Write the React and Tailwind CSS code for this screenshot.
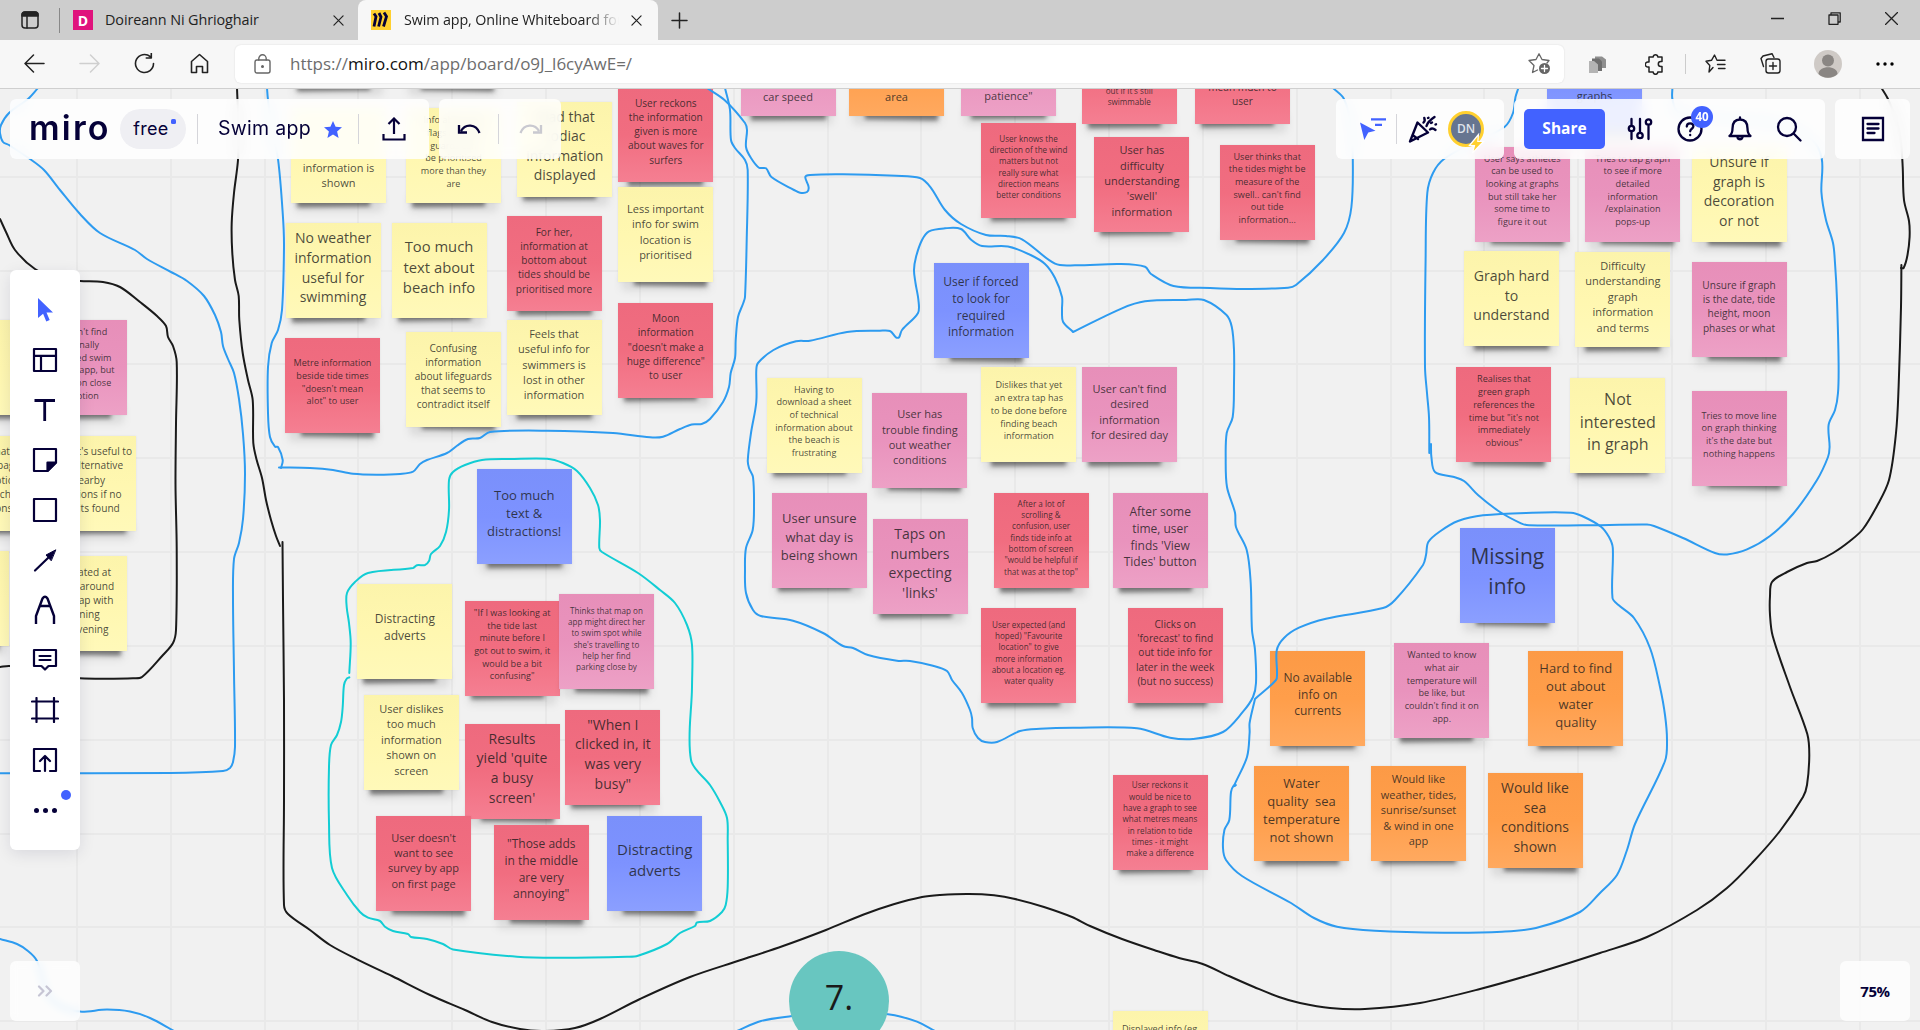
import React from "react";

/* ---------- board data ---------- */

const TONES = {
  Y: "bg-linear-to-b from-[#fcf4ab] via-[#fff7b0] to-[#fff9b9]",
  R: "bg-linear-to-b from-[#ee6a7e] via-[#f16d80] to-[#f57f92]",
  P: "bg-linear-to-b from-[#e78fb9] via-[#e993bd] to-[#eda1c6]",
  B: "bg-linear-to-b from-[#7a90fb] via-[#7d92ff] to-[#8b9fff]",
  O: "bg-linear-to-b from-[#fc9a46] via-[#ff9e4a] to-[#ffa95f]",
};

// [x, y, tone, shadow side, font size, lines]
const NOTES = [
  [291, -8, "Y", "l", 11, []],
  [405, -8, "Y", "r", 11, []],
  [291, 108, "Y", "l", 11, ["", "", "", "information is", "shown"]],
  [406, 108, "Y", "l", 9.1, ["Info about the", "flags and life", "guards can", "be prioritised", "more than they", "are"]],
  [517.3, 101.5, "Y", "l", 14, ["Glad that", "zodiac", "information", "displayed"]],
  [618.3, 87, "R", "c", 10.15, ["User reckons", "the information", "given is more", "about waves for", "surfers"]],
  [285.5, 223.3, "Y", "l", 14, ["No weather", "information", "useful for", "swimming"]],
  [391.5, 222.7, "Y", "l", 14.8, ["Too much", "text about", "beach info"]],
  [506.5, 216, "R", "c", 10.15, ["For her,", "information at", "bottom about", "tides should be", "prioritised more"]],
  [618, 187.3, "Y", "r", 11, ["Less important", "info for swim", "location is", "prioritised"]],
  [285, 338.3, "R", "r", 9.1, ["Metre information", "beside tide times", "\"doesn't mean", "alot\" to user"]],
  [405.7, 331.8, "Y", "r", 10.15, ["Confusing", "information", "about lifeguards", "that seems to", "contradict itself"]],
  [506.5, 320, "Y", "c", 11, ["Feels that", "useful info for", "swimmers is", "lost in other", "information"]],
  [618.2, 302.5, "R", "l", 10.15, ["Moon", "information", "\"doesn't make a", "huge difference\"", "to user"]],

  [740.5, 21.3, "P", "c", 11, ["", "", "", "", "car speed"]],
  [849, 21.3, "O", "r", 11, ["", "", "", "", "area"]],
  [961, 20.7, "P", "c", 11, ["", "", "", "", "patience\""]],
  [1081.8, 29, "R", "l", 8.1, ["", "", "", "", "out if it's still", "swimmable"]],
  [1195, 28.7, "R", "l", 10.15, ["", "", "", "mean much to", "user"]],
  [981, 122.5, "R", "c", 8.1, ["User knows the", "direction of the wind", "matters but not", "really sure what", "direction means", "better conditions"]],
  [1094.4, 136.5, "R", "l", 11, ["User has", "difficulty", "understanding", "'swell'", "information"]],
  [1219.7, 144.5, "R", "r", 9.1, ["User thinks that", "the tides might be", "measure of the", "swell.. can't find", "out tide", "information..."]],
  [933.5, 263.3, "B", "r", 12, ["User if forced", "to look for", "required", "information"]],
  [766.5, 377.5, "Y", "l", 9.1, ["Having to", "download a sheet", "of technical", "information about", "the beach is", "frustrating"]],
  [872.3, 392.7, "P", "r", 11, ["User has", "trouble finding", "out weather", "conditions"]],
  [981.3, 367, "Y", "c", 9.1, ["Dislikes that yet", "an extra tap has", "to be done before", "finding beach", "information"]],
  [1082, 367.3, "P", "l", 11, ["User can't find", "desired", "information", "for desired day"]],
  [771.8, 492.5, "P", "l", 13, ["User unsure", "what day is", "being shown"]],
  [872.5, 519, "P", "l", 14, ["Taps on", "numbers", "expecting", "'links'"]],
  [993.5, 493, "R", "l", 8.1, ["After a lot of", "scrolling &", "confusion, user", "finds tide info at", "bottom of screen", "\"would be helpful if", "that was at the top\""]],
  [1112.7, 493.3, "P", "l", 12, ["After some", "time, user", "finds 'View", "Tides' button"]],
  [981.2, 608.3, "R", "l", 8.1, ["User expected (and", "hoped) \"Favourite", "location\" to give", "more information", "about a location eg.", "water quality"]],
  [1127.7, 608.3, "R", "l", 10.15, ["Clicks on", "'forecast' to find", "out tide info for", "later in the week", "(but no success)"]],

  [476.7, 469, "B", "c", 13, ["Too much", "text &", "distractions!"]],
  [357.3, 584, "Y", "l", 12, ["Distracting", "adverts"]],
  [464.7, 600.7, "R", "l", 9.1, ["\"If I was looking at", "the tide last", "minute before I", "got out to swim, it", "would be a bit", "confusing\""]],
  [559, 594.3, "P", "r", 8.1, ["Thinks that map on", "app might direct her", "to swim spot while", "she's travelling to", "help her find", "parking close by"]],
  [363.8, 695.3, "Y", "l", 11, ["User dislikes", "too much", "information", "shown on", "screen"]],
  [464.5, 723.7, "R", "r", 14, ["Results", "yield 'quite", "a busy", "screen'"]],
  [565.3, 709.7, "R", "l", 14, ["\"When I", "clicked in, it", "was very", "busy\""]],
  [376, 816.2, "R", "r", 11, ["User doesn't", "want to see", "survey by app", "on first page"]],
  [493.7, 825.3, "R", "r", 12, ["\"Those adds", "in the middle", "are very", "annoying\""]],
  [607.2, 816.2, "B", "r", 15, ["Distracting", "adverts"]],

  [1459.8, 527.5, "B", "r", 21, ["Missing", "info"]],
  [1270.2, 650.7, "O", "c", 12, ["No available", "info on", "currents"]],
  [1394.3, 643, "P", "l", 9.1, ["Wanted to know", "what air", "temperature will", "be like, but", "couldn't find it on", "app."]],
  [1528.3, 650.7, "O", "c", 13, ["Hard to find", "out about", "water", "quality"]],
  [1254, 766, "O", "c", 13, ["Water", "quality  sea", "temperature", "not shown"]],
  [1371, 765.7, "O", "c", 11, ["Would like", "weather, tides,", "sunrise/sunset", "& wind in one", "app"]],
  [1487.5, 773, "O", "r", 14, ["Would like", "sea", "conditions", "shown"]],
  [1112.5, 774.8, "R", "l", 8.1, ["User reckons it", "would be nice to", "have a graph to see", "what metres means", "in relation to tide", "times - it might", "make a difference"]],

  [1547, 36, "B", "r", 11, ["", "", "graphs"]],
  [1474.7, 146.5, "P", "r", 9.1, ["User says athletes", "can be used to", "looking at graphs", "but still take her", "some time to", "figure it out"]],
  [1585.2, 146.5, "P", "r", 9.1, ["Tries to tap graph", "to see if more", "detailed", "information", "/explaination", "pops-up"]],
  [1691.5, 147, "Y", "r", 14, ["Unsure if", "graph is", "decoration", "or not"]],
  [1464, 251.3, "Y", "c", 14.1, ["Graph hard", "to", "understand"]],
  [1575.3, 252.3, "Y", "c", 11, ["Difficulty", "understanding", "graph", "information", "and terms"]],
  [1691.5, 262.2, "P", "r", 10.15, ["Unsure if graph", "is the date, tide", "height, moon", "phases or what"]],
  [1456.4, 367.3, "R", "r", 9.1, ["Realises that", "green graph", "references the", "time but \"it's not", "immediately", "obvious\""]],
  [1570.3, 377.8, "Y", "l", 16, ["Not", "interested", "in graph"]],
  [1691.5, 390.7, "P", "r", 9.1, ["Tries to move line", "on graph thinking", "it's the date but", "nothing happens"]],

  [1113.2, 1010.5, "Y", "c", 9.1, ["Displayed info (eg.", "", "", "", ""]],

  [-70, 320, "Y", "c", 10.15, []],
  [32.3, 320, "P", "l", 9.1, ["We can't find", "originally", "searched swim", "spot on app, but", "based on close", "adoption"]],
  [-54, 435.5, "Y", "c", 10.15, ["Says that is", "home page", "description", "for beach is", "conditions in"]],
  [41, 435.5, "Y", "c", 10.15, ["When it's useful to", "see alternative", "nearby", "locations if no", "results found"]],
  [-86, 551, "Y", "c", 10.15, ["", "", "", "results like this"]],
  [32.3, 556, "Y", "r", 10.15, ["It's located at", "always around", "on a map with", "morning", "and evening"]],
];

const BLUE = "#2d9bf0";
const BLACK = "#1a1a1a";
const TEAL = "#12cdd4";

const STROKES = [
  [BLUE, [38,88,28,99,9,113,1,125,0,133,3,142,9,145,30,159,44,170,60,190,80,214,100,233,135,250,147,259,171,272,187,281,204,296,215,315,221,332,223,346,228,359,234,373,239,399,243,434,245,474,243,519,239,543,234,559,233,598,234,673,235,747,233,762,230,768,223,771,170,773,0,773.3]],
  [BLACK, [0,219,6,232,15,250,35,269,58,279,80,281,103,282,120,287,140,302,157,316,166,326,168,337,173,346,176.7,362,176,424,175.5,484,176.7,548,176,630,173,643,163,655,142,677,133,678.3,80,678.3,45,673,10,666,0,667]],
  [BLACK, [237,88,238.5,130,238,160,234,193,231.7,223,232.3,253,235,280,238.7,296,239.3,320,242.7,353,248,380,252.7,400,253.3,443,256.7,460,262,478,266,500,271,520,276,536,280,546]],
  [BLACK, [282.5,542,283,600,284,700,284,800,284,905,288,914,310,930,330,945,357,959.3,392,976,430,995,465,1010,492,1022,520,1029,545,1031,575,1028,600,1019,640,999,690,977,740,960.3,783,946,826,930,863,914.7,893.6,904.3,922,897,940,895,969,894,994,895.3,1015,899,1044,907,1072,917,1090,926,1122,939,1154,950,1179,958,1202,963.7,1229,976,1254,987,1279,997,1300,1003,1330,1008,1365,1009,1420,1003,1480,989,1540,972,1600,953,1647,937,1697,910,1727,888,1753,862,1780,831,1803,797,1807,785,1809.3,755,1807.3,734,1790,687,1772.7,636,1770,615,1770,596,1772,582,1787,572,1807,563,1817,561,1833,553,1850,541,1863,529,1877,506,1889,480,1896,433,1898.6,387,1901,307,1901.4,265]],
  [BLACK, [1881.5,88,1888,99,1897,122,1901,143,1902.7,167,1904,200,1909,221,1909.6,237,1907.5,255,1903.6,268,1901,268]],
  [BLUE, [1518.4,88,1515.5,97,1513,113,1504.5,127,1474,142,1444,159,1433,173,1427.3,193,1425.6,260,1425,367,1427,393,1429,417,1429.3,453]],
  [BLUE, [1431,444,1431.4,457,1435,472,1453,476.7,1464,481,1478,495,1500,512,1521,523.3,1529,525.3,1582,525.3,1647,524.5,1654,526,1683,538,1715,553,1727,554.4,1747,549.4,1770,536,1793,514,1817,480,1828,457,1829.6,447,1828.6,425,1835,410,1838,393,1838.6,363,1837,300,1835,263,1833,243,1826,220,1821.4,192,1821.8,159,1812,140,1780,124,1720,118,1678,112,1672.4,99,1672.4,88]],
  [BLUE, [1255,699,1276,680,1277,673,1276.8,650,1284,638,1299,627.7,1326,618.7,1383,608,1395,600,1423,565,1426,555,1428.3,542,1440.6,531,1458,521,1483,515.3,1532,512.7,1571,512.7,1582,516,1601,526.7,1609,537,1612.8,548,1612.5,598,1618.5,605,1634,618,1650,648,1660,687,1665,715,1667,740,1665,761,1635,824,1627,850,1617,875,1600,893,1580,912,1536,928,1502,931.7,1444,932.7,1375,930.7,1337,926.7,1314,918,1291,903,1242,876,1226,860,1223,848,1224.4,830,1229.3,820,1231,792,1234,785,1236,785,1234,786,1247,757,1249.6,733,1249.6,723,1255,699]],
  [BLUE, [1073,332,1063,321.7,1062,310,1062,297,1055,278,1045,264,1030.6,255,1008,246.5,982,246,971.4,240,961,229,945,228.3,929,231.3,922,240,916,257,914,270,915.5,283,918.4,300,918,313,902,330,899,337.3,896,337.3,890,331,880,330.7,847,332,810,340.7,796,341.3,773.5,350,758,363,756.3,370,756.3,402,751,433,747.8,460,749,468,753,477,754,507,752.7,530,746,548,745,570,746,593,753,610,760.7,616,793,620.7,823,633,843,646,853,648,868,655,897,660.7,910,661,933,665.7,947,671,952,680,962,693,970,710,972,718,972.7,728,978,738,985,742,997,742,1020,731,1040,728.7,1073,727.7,1137,728.3,1170,737.7,1193,739,1223,732,1243,711.7,1253,697,1256,683,1255,650,1252,630,1250.7,583,1246.7,550,1236,527,1235,512.7,1227,487,1225.7,460,1226.7,433,1232.7,417,1234,383,1234,350,1231.8,327,1226.5,315,1204,300,1186,300,1145,301.3,1122,308.3,1073,332]],
  [BLUE, [707,88,724.5,100,745,123,747,130,746,147,751,158,759,167.7,766,168.3,771.4,177,794,190,800,192.7,807,192,808.6,187,805.3,177,810,175,843,174.3,896,175.7,920,178,930.6,187.3,945,210,961,224,986,235,1006,236,1022,239.3,1055,263.7,1075,265.3,1120,264,1145,266.7,1151,274,1173.5,286,1210,288,1243,289,1288,287.7,1296,285,1323,260,1344,233,1351.4,207,1352.8,159,1351,125,1344,99,1333,88]],
  [BLUE, [725,88,730,110,731,140,735,148,745,160,747.7,170,746.7,240,745,297,743.3,303,738,317,735.7,340,735,358,730.7,373,729,387,723,402,710,419,701.7,424,691.7,424.5,680,429,663,436.7,650,437.3,613,433,547,430.7,490,432,480,438,468,439,457,445.7,447,453,427,460,420,464,413,471.7,400,474,377,474.7,353,473.7,333,470,310,468,279,467.5]],
  [BLUE, [267,88,268,100,272,130,278,159,282.7,213,284,247,282,310,278,330,271.7,343,268,367,268,413,270,437,275,446.7,278,447,282.7,460,281,468]],
  [TEAL, [349.3,673,350.7,643,349,623,346.7,607,347,593,355,582,368,573,413,568,417,565.2,425,565,429,561,431,554,440,546,446,532,449,510,449,480,453,472,465,465,482,460,510,459,547,458.7,563,463,577,471,590,488,598,505,600,520,599.3,548,602,552,638,573,660,590,675,603,687,625,692,645,692,687,691,760,710,785,720,802,727,818,727.7,840,727.7,887,725.7,905,722,912,710,921,697,922.5,695,926,680,933,667,944,638,955.7,627,956.7,560,957.7,517,956.7,453,949.5,443,944,427,939,411,937,408,934,393,931,385,926.7,380,921,368,917.7,360,912,347,895,332,868,329,823,329,767,331,745,337,735,341,722,342.7,707,344,685,346.5,679,349.3,677.3]],
  [BLUE, [0,939,17,944,28,951,37,961,48,995,62,1007,80,1011.6,107,1009.6,130,1011.6,150,1018,174,1031]],
  [BLUE, [737,1031,761,1021,792,1016,840,1010,888,1014.3,901,1016.7,917,1021.7,935,1031]],
];

// Smooths a flat list of coordinates into a cubic path.
function smoothPath(f) {
  const p = [];
  for (let i = 0; i < f.length; i += 2) p.push([f[i], f[i + 1]]);
  let d = `M${p[0][0]} ${p[0][1]}`;
  const len = (a, b) => Math.hypot(b[0] - a[0], b[1] - a[1]) || 1;
  for (let i = 0; i < p.length - 1; i++) {
    const a = p[i - 1] || p[i], b = p[i], c = p[i + 1], e = p[i + 2] || c;
    const l = len(b, c);
    const l0 = len(a, b), l2 = len(c, e);
    const k1 = (0.33 * l) / (l0 + l), k2 = (0.33 * l) / (l + l2);
    d += `C${(b[0] + (c[0] - a[0]) * k1).toFixed(1)} ${(b[1] + (c[1] - a[1]) * k1).toFixed(1)} ${(c[0] - (e[0] - b[0]) * k2).toFixed(1)} ${(c[1] - (e[1] - b[1]) * k2).toFixed(1)} ${c[0]} ${c[1]}`;
  }
  return d;
}

const SHADOWS = {
  l: "left-[6px] right-[16px] rotate-[-0.8deg]",
  c: "left-[10px] right-[10px] rotate-[-0.5deg]",
  r: "left-[16px] right-[6px] rotate-[1deg]",
};

function Note({ x, y, tone, side, size, lines }) {
  return (
    <div className="absolute size-[95px]" style={{ left: x, top: y }}>
      <div className={`absolute -bottom-[3.5px] h-[12px] bg-black/45 blur-[2px] ${SHADOWS[side]}`} />
      <div className="absolute inset-x-[4px] -bottom-[8px] h-[16px] bg-black/10 blur-[4px]" />
      <div
        className={`relative flex size-full flex-col items-center justify-center whitespace-pre pb-[6.500px] text-center leading-[1.4] text-[#1a1a1a]/80 shadow-[0_0_2px_rgba(0,0,0,0.08)] ${TONES[tone]}`}
        style={{ fontSize: size }}
      >
        {lines.map((line, i) => (
          <div key={i} className="shrink-0">{line || "\u00a0"}</div>
        ))}
      </div>
    </div>
  );
}

function Board() {
  const vs = Array.from({ length: 20 }, (_, i) => 76.9 + i * 93.83);
  const hs = Array.from({ length: 10 }, (_, i) => 176.7 + i * 93.83);
  return (
    <div className="absolute inset-x-0 -top-[89px] h-[1030px]">
      <svg className="absolute inset-0" width="1920" height="1030">
        {vs.map((v) => <path key={v} d={`M${Math.round(v)} 0V1030`} stroke="#e9e9e9" strokeWidth="2" />)}
        {hs.map((h) => <path key={h} d={`M0 ${Math.round(h)}H1920`} stroke="#e9e9e9" strokeWidth="2" />)}
      </svg>
      {NOTES.map(([x, y, tone, side, size, lines], i) => (
        <Note key={i} x={x} y={y} tone={tone} side={side} size={size} lines={lines} />
      ))}
      <svg className="absolute inset-0" width="1920" height="1030" fill="none" strokeWidth="2" strokeLinecap="round">
        {STROKES.map(([color, pts], i) => <path key={i} d={smoothPath(pts)} stroke={color} />)}
      </svg>
      <div className="absolute left-[789px] top-[951px] flex size-[100px] items-center justify-center rounded-full bg-[#68c6c0] pb-[7px] text-[34px] text-[#1a1a1a]">7.</div>
    </div>
  );
}

/* ---------- browser chrome ---------- */

function Ico({ w = 24, h = w, sw = 1.5, vb, className = "", children }) {
  return (
    <svg width={w} height={h} viewBox={vb || `0 0 ${w} ${h}`} fill="none" stroke="currentColor" strokeWidth={sw} strokeLinecap="round" strokeLinejoin="round" className={`shrink-0 ${className}`}>
      {children}
    </svg>
  );
}

const Cross = ({ s = 12 }) => <Ico w={s} vb="0 0 12 12" sw={1.3}><path d="M1 1l10 10M11 1L1 11" /></Ico>;

function TabStrip() {
  return (
    <div className="flex h-[40px] bg-[#cdcdcd] text-[15px] tracking-[-0.1px] text-[#222]">
      <div className="flex w-[358px] items-center pl-[21px] pr-[14px]">
        <Ico w={18} h={18}>
          <rect x="1" y="1" width="16" height="16" rx="3" />
          <path d="M1 5V4a3 3 0 013-3h10a3 3 0 013 3v1z" fill="currentColor" />
          <path d="M6 5v12" />
        </Ico>
        <div className="ml-[20px] h-[25px] w-px bg-[#888]" />
        <div className="ml-[13px] flex size-[20px] items-center justify-center bg-[#e0137d] text-[14px] font-bold text-white">D</div>
        <div className="ml-[12px] grow whitespace-nowrap text-[14.4px]">Doireann Ni Ghrioghair</div>
        <Cross s={11} />
      </div>
      <div className="flex w-[300px] items-center rounded-t-[8px] bg-[#f7f7f7] pl-[13px] pr-[16px]">
        <svg width="20" height="20" viewBox="0 0 20 20" className="shrink-0">
          <rect width="20" height="20" fill="#ffd02f" />
          <path d="M3 3.5l2 3-2 10M8 3l2 4-2.400 9.500M13 2.500l2.500 4-3 10" stroke="#050038" strokeWidth="2.800" fill="none" />
        </svg>
        <div className="ml-[13px] w-[215px] overflow-hidden whitespace-nowrap text-[14.3px] mask-r-from-85%">Swim app, Online Whiteboard for</div>
        <div className="ml-auto"><Cross s={11} /></div>
      </div>
      <div className="flex items-center pl-[13px]"><Ico w={17} sw={1.5}><path d="M8.500 1v15M1 8.500h15" /></Ico></div>
      <div className="ml-auto flex items-center gap-[44px] pr-[22px] pb-[3px]">
        <Ico w={13} sw={1.3}><path d="M0 6.500h13" /></Ico>
        <Ico w={13} sw={1.3}><path d="M1 3h9v9.300H1zM3 3V.8h9.200V10H10" /></Ico>
        <Ico w={13} sw={1.3}><path d="M.5.5l12 12M12.500.5l-12 12" /></Ico>
      </div>
    </div>
  );
}

function AddressBar() {
  return (
    <div className="flex h-[49px] items-center border-b border-[#cfcfcf] bg-[#f7f7f7] pb-[1px] text-[#222]">
      <div className="flex w-[235px] items-center gap-[34px] pl-[24px]">
        <Ico w={21} sw={1.5}><path d="M20 10.500H1.500M9.500 2L1 10.500 9.500 19" /></Ico>
        <Ico w={21} sw={1.5} className="text-[#cfcfcf]"><path d="M1 10.500h18.500M11.500 2l8.500 8.500-8.500 8.500" /></Ico>
        <Ico w={21} sw={1.6}><path d="M19.500 10.500a9 9 0 11-3.200-6.900M17.300 0v5h-5" /></Ico>
        <Ico w={21} sw={1.6}><path d="M2.500 8.500L10.500 1.500l8 7V19.500h-5v-6h-6v6h-5z" /></Ico>
      </div>
      <div className="flex h-[38px] w-[1329px] items-center rounded-[6px] bg-white pl-[19px] pr-[13px] shadow-[0_0_2px_rgba(0,0,0,0.12)]">
        <Ico w={17} h={20} sw={1.4} className="text-[#666]">
          <rect x="1" y="6" width="15" height="13" rx="2" />
          <path d="M4.800 6V4.500a3.700 3.700 0 017.400 0V6" />
          <circle cx="8.500" cy="12.500" r=".8" fill="currentColor" />
        </Ico>
        <div className="ml-[19px] grow whitespace-nowrap text-[17px] text-[#6d6d6d]">
          https://<span className="text-[#111]">miro.com</span>/app/board/o9J_l6cyAwE=/
        </div>
        <Ico w={23} h={22} sw={1.3} className="text-[#666]">
          <path d="M19 10l2-2.500-7-1L11 .8 8 6.500l-7 1 5 5L4.500 19.500 9.500 17" />
          <circle cx="16.500" cy="15.500" r="5.500" fill="currentColor" stroke="none" />
          <path d="M16.500 12.500v6M13.500 15.500h6" stroke="#fff" />
        </Ico>
      </div>
      <div className="flex grow items-center pl-[24px]">
        <svg width="20" height="20" viewBox="0 0 20 20" className="shrink-0">
          <path d="M7 2.500h7l4 3V14H7z" fill="#8f8f8f" />
          <path d="M4 4.500h7l3 3V17H4z" fill="#6f6f6f" />
          <path d="M1 7h5l4 3.500V19H1z" fill="#b4b4b4" />
        </svg>
        <Ico w={20} h={22} sw={1.500} className="ml-[37px]">
          <path d="M4 4h4.200a2.300 2.300 0 114.600 0H17v4.500h-1.200a2.300 2.300 0 100 5H17V19h-4.200a2.300 2.300 0 11-4.600 0H4v-5H2.800a2.300 2.300 0 110-5H4z" />
        </Ico>
        <div className="ml-[20px] h-[20px] w-px bg-[#ccc]" />
        <Ico w={21} h={20} sw={1.400} className="ml-[19px]">
          <path d="M8 13.500L4 18l.8-6.500L1 7.200l5.500-.9L9.500 1l2.500 5.300M13 6.300h7M12.500 10.500H20M13.500 14.500H20" />
        </Ico>
        <Ico w={21} h={21} sw={1.400} className="ml-[34px]">
          <path d="M3.500 13.500L1 5.500 3 3l9-2.300 2 3.800" />
          <rect x="6" y="6" width="14" height="14" rx="2.500" />
          <path d="M13 9.500v7M9.500 13h7" />
        </Ico>
        <svg width="28" height="28" viewBox="0 0 28 28" className="ml-[33px] shrink-0">
          <circle cx="14" cy="14" r="14" fill="#cfcac6" />
          <circle cx="14" cy="10.500" r="6" fill="#8a8683" />
          <path d="M4.500 24c0-9 19-9 19 0a14 14 0 01-19 0z" fill="#8a8683" />
        </svg>
        <svg width="18" height="4" viewBox="0 0 18 4" className="ml-[34px] shrink-0">
          <circle cx="2" cy="2" r="1.700" /><circle cx="9" cy="2" r="1.700" /><circle cx="16" cy="2" r="1.700" />
        </svg>
      </div>
    </div>
  );
}

/* ---------- board controls ---------- */

const BAR = "flex h-[60px] items-center rounded-[6px] bg-white/85 backdrop-blur-[7px]";
const Rule = ({ className = "" }) => <div className={`h-[30px] w-px bg-[#d5d5da] ${className}`} />;

function TopControls() {
  return (
    <div className="absolute inset-x-[10px] top-[10px] flex text-[#050038]">
      <div className={`${BAR} w-[419px] pl-[19px]`}>
        <div className="w-[91px] pb-[2px] font-['Inter'] text-[34px] font-semibold leading-none tracking-[2.200px]">miro</div>
        <div className="relative flex h-[40px] w-[66px] items-center justify-center rounded-full bg-[#efeff3] pb-[2px] pr-[4px] font-['Inter'] text-[18px] tracking-[0.3px]">
          free
          <div className="absolute right-[10px] top-[10px] size-[5px] rounded-[1.500px] bg-[#4262ff]" />
        </div>
        <Rule className="ml-[11px]" />
        <div className="ml-[20px] w-[106px] whitespace-nowrap font-['Inter'] text-[19.500px] tracking-[0.300px]">Swim app</div>
        <svg width="18" height="17" viewBox="0 0 18 17" className="shrink-0"><path d="M9 0l2.600 5.700 6.400.5-4.900 4.200L14.600 17 9 13.500 3.400 17l1.500-6.600L0 6.200l6.400-.5z" fill="#4262ff" /></svg>
        <Rule className="ml-[16px]" />
        <Ico w={24} sw={2.200} className="ml-[23px]"><path d="M12 17V2M6.500 7L12 1.500 17.500 7M1.500 17v5.500h21V17" strokeLinecap="butt" strokeLinejoin="miter" /></Ico>
      </div>
      <div className={`${BAR} ml-[10px] w-[122px] pl-[18px]`}>
        <Ico w={24} h={14} sw={2.300}><path d="M22.500 11C19 1.500 8 1.500 4 9M2 3v7.500h8" strokeLinecap="butt" strokeLinejoin="miter" /></Ico>
        <Rule className="ml-[17px]" />
        <Ico w={24} h={14} sw={2.300} className="ml-[20px] text-[#c9c9d0]"><path d="M1.500 11C5 1.500 16 1.500 20 9M22 3v7.500h-8" strokeLinecap="butt" strokeLinejoin="miter" /></Ico>
      </div>

      <div className={`${BAR} ml-auto w-[168px] pl-[23px]`}>
        <svg width="27" height="24" viewBox="0 0 27 24" className="shrink-0" fill="#4262ff">
          <path d="M1 5.500l15.500 8.300-7.200 1.600L5.300 23z" />
          <path d="M12 1.200h15v2.300H12zM16 6.700h7V9h-7z" />
        </svg>
        <Rule className="ml-[10px]" />
        <Ico w={30} h={28} sw={2.400} className="ml-[11px]">
          <path d="M2 26.500L9.500 7.500 20 17.500zM4.500 20l5.500 4" />
          <path d="M15.500 7.500c1.500-1 1.500-2.500.8-4.500M18.500 11c1-4 3.500-6 8-9M22 14.500c1.500-1.500 3.500-1.200 5.500.5M23 8l1-.5M20 3l.5-.2M27.500 9.500l.5-.2" />
        </Ico>
        <div className="relative ml-[10px] flex size-[36px] items-center justify-center rounded-full border-[3px] border-[#ffd02f] bg-[#667590] text-[12px] font-semibold text-[#dfe3ea]">
          DN
          <svg width="17" height="21" viewBox="0 0 17 21" className="absolute -bottom-[10px] -right-[4px]">
            <path d="M10.500 1.500L1.500 12.500h5l-2 7.500L15.500 8.500H9.800z" fill="#ffd02f" stroke="#fff" strokeWidth="1.200" />
          </svg>
        </div>
      </div>
      <div className={`${BAR} ml-[10px] w-[311px] pl-[10px]`}>
        <div className="flex h-[40px] w-[81px] items-center justify-center rounded-[5px] bg-[#4262ff] text-[15.500px] font-bold text-white">Share</div>
        <Ico w={26} h={24} sw={2.300} className="ml-[22px]">
          <path d="M4.500 2v6.500M4.500 14.500V22M13 2v13M21.500 9v13" />
          <circle cx="4.500" cy="11.500" r="2.700" /><circle cx="13" cy="18.500" r="2.700" /><circle cx="21.500" cy="5" r="2.700" />
        </Ico>
        <div className="relative ml-[24px]">
          <Ico w={26} sw={2.300}><circle cx="13" cy="13" r="11.500" /><path d="M9.800 10.500c0-4.300 6.600-4.100 6.600-.2 0 2.500-3.200 2.400-3.200 5M13.200 19v.2" /></Ico>
          <div className="absolute -top-[10px] left-[14px] flex size-[22px] items-center justify-center rounded-full bg-[#4262ff] text-[11.500px] font-bold text-white">40</div>
        </div>
        <Ico w={24} h={26} sw={2.300} className="ml-[25px]">
          <path d="M1.500 20h21c-2.500-2-3-4-3-7.500C19.500 7 17 3.500 12 3.500S4.500 7 4.500 12.500c0 3.500-.5 5.500-3 7.500zM12 3.500V1.500" />
          <path d="M9.500 21.500a2.600 2.600 0 005 0" fill="currentColor" />
        </Ico>
        <Ico w={26} h={26} sw={2.300} className="ml-[24px]"><circle cx="11" cy="11" r="9" /><path d="M17.800 17.800L24.500 24.500" /></Ico>
      </div>
      <div className={`${BAR} ml-[10px] w-[75px] justify-center`}>
        <Ico w={24} h={26} sw={2.300}><path d="M2 2h20v22H2zM6.500 8h11M6.500 12.500h11M6.500 17h7" strokeLinejoin="miter" /></Ico>
      </div>
    </div>
  );
}

function ToolRail() {
  return (
    <div className="absolute left-[10px] top-[181px] grid h-[580px] w-[70px] auto-rows-[50px] place-items-center rounded-[6px] bg-white pt-[15px] text-[#050038] shadow-[0_4px_16px_rgba(5,0,56,0.1)]">
      <svg width="26" height="26" viewBox="0 0 26 26" fill="#4262ff"><path d="M6 1l15 14.500h-6.500l3.200 7.500-3.400 1.500-3.200-7.800L6 21z" /></svg>
      <Ico w={26} sw={2.200}><path d="M2 2h22v22H2zM2 8.800h22M9 9v15" /></Ico>
      <Ico w={26} sw={2.800}><path d="M2.500 3.500h20.500M12.700 3.500V24" strokeLinecap="butt" /></Ico>
      <Ico w={26} sw={2.200}><path d="M2 2h22v13.500L15.500 24H2z" /><path d="M24 15.500h-8.500V24z" fill="currentColor" /></Ico>
      <Ico w={26} sw={2.200}><path d="M2 2h22v22H2z" /></Ico>
      <Ico w={26} sw={2.200}><path d="M3 23.500L16 11" /><path d="M23.500 3L14 8l5 5.500z" fill="currentColor" strokeWidth="1" /></Ico>
      <Ico w={26} h={30} sw={2.400}><path d="M4 29v-8L10.500 3.500Q13 0 15.500 3.500L22 21v8M8.500 11h9" strokeLinecap="butt" /></Ico>
      <Ico w={26} h={24} sw={2.200}><path d="M2 2h22v16h-7.500L13 21.500 9.500 18H2zM7.500 8h11M7.500 12h11" /></Ico>
      <Ico w={28} h={26} sw={2.200}><path d="M1 4.500h26M1 21.500h26M5.500 1v24M23 1v24" /></Ico>
      <Ico w={26} sw={2.200}><path d="M8 24H2V2h22v22h-6M13 24V9M8 14l5-5 5 5" /></Ico>
      <div className="relative flex gap-[4px]">
        <div className="size-[5px] rounded-full bg-[#050038]" />
        <div className="size-[5px] rounded-full bg-[#050038]" />
        <div className="size-[5px] rounded-full bg-[#050038]" />
        <div className="absolute -right-[14px] -top-[18px] size-[10px] rounded-full bg-[#4262ff]" />
      </div>
    </div>
  );
}

export default function App() {
  return (
    <div className="flex h-[1030px] w-[1920px] flex-col overflow-hidden bg-[#f1f1f1] font-['Open_Sans','Noto_Sans',sans-serif]">
      <TabStrip />
      <AddressBar />
      <div className="relative grow overflow-hidden">
        <Board />
        <TopControls />
        <ToolRail />
        <div className="absolute bottom-[9px] left-[10px] flex h-[60px] w-[70px] items-center justify-center rounded-[6px] bg-white/80 text-[#c6c5d4] backdrop-blur-[4px]">
          <Ico w={16} h={12} sw={2.200}><path d="M2 1.500L6.500 6 2 10.500M9.500 1.500L14 6l-4.500 4.500" /></Ico>
        </div>
        <div className="absolute bottom-[9px] right-[10px] flex h-[60px] w-[70px] items-center justify-center rounded-[6px] bg-white/80 text-[15px] font-bold tracking-[-0.4px] text-[#050038]">75%</div>
      </div>
    </div>
  );
}
